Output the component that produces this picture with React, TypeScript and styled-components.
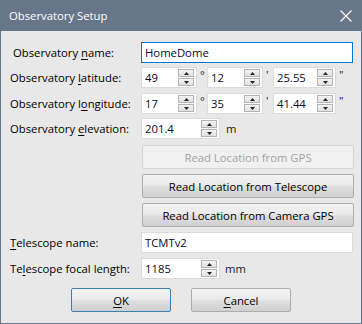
import React from 'react';
import styled, { createGlobalStyle } from 'styled-components';

const GlobalStyle = createGlobalStyle`
  html, body {
    margin: 0;
    padding: 0;
    background: #e8e8e8;
  }
  * {
    box-sizing: border-box;
  }
`;

const Spinner: React.FC = () => (
  <SpinButtons>
    <SpinHalf>
      <svg width="5" height="3" viewBox="0 0 5 3">
        <path d="M2.5 0 L5 3 L0 3 Z" fill="#222" />
      </svg>
    </SpinHalf>
    <SpinHalf>
      <svg width="5" height="3" viewBox="0 0 5 3">
        <path d="M0 0 L5 0 L2.5 3 Z" fill="#222" />
      </svg>
    </SpinHalf>
  </SpinButtons>
);

const SpinField: React.FC<{ value: string; width: number }> = ({ value, width }) => (
  <SpinBox $width={width}>
    <FieldText>{value}</FieldText>
    <Spinner />
  </SpinBox>
);

const App: React.FC = () => {
  return (
    <>
      <GlobalStyle />
      <Window>
        <TitleBar>
          <TitleText>Observatory Setup</TitleText>
          <CloseIcon width="12" height="12" viewBox="0 0 12 12">
            <path d="M0.5 0.5 L11.5 11.5 M11.5 0.5 L0.5 11.5" stroke="#fff" strokeWidth="1.1" />
          </CloseIcon>
        </TitleBar>
        <Body>
          <Row $top={11}>
            <Label $indent={3}>
              Observatory <u>n</u>ame:
            </Label>
            <TextBox $focused $width={212}>
              <FieldText>HomeDome</FieldText>
            </TextBox>
          </Row>
          <Row $top={4}>
            <Label>
              Observatory <u>l</u>atitude:
            </Label>
            <SpinField value="49" width={56} />
            <Unit $width={10}>°</Unit>
            <SpinField value="12" width={56} />
            <Unit $width={10}>'</Unit>
            <SpinField value="25.55" width={63} />
            <Unit $width={10}>"</Unit>
          </Row>
          <Row $top={5}>
            <Label>
              Observatory l<u>o</u>ngitude:
            </Label>
            <SpinField value="17" width={56} />
            <Unit $width={10}>°</Unit>
            <SpinField value="35" width={56} />
            <Unit $width={10}>'</Unit>
            <SpinField value="41.44" width={63} />
            <Unit $width={10}>"</Unit>
          </Row>
          <Row $top={4}>
            <Label>
              Observatory <u>e</u>levation:
            </Label>
            <SpinField value="201.4" width={79} />
            <Unit $width={20} $pad={6}>m</Unit>
          </Row>
          <ButtonColumn>
            <WideButton disabled>Read Location from GPS</WideButton>
            <WideButton>Read Location from Telescope</WideButton>
            <WideButton>Read Location from Camera GPS</WideButton>
          </ButtonColumn>
          <Row $top={5}>
            <Label>
              <u>T</u>elescope name:
            </Label>
            <TextBox $width={212}>
              <FieldText>TCMTv2</FieldText>
            </TextBox>
          </Row>
          <Row $top={5}>
            <Label>
              Te<u>l</u>escope focal length:
            </Label>
            <SpinField value="1185" width={79} />
            <Unit $width={30} $pad={5}>mm</Unit>
          </Row>
          <Footer>
            <DialogButton $default>
              <u>O</u>K
            </DialogButton>
            <DialogButton>
              <u>C</u>ancel
            </DialogButton>
          </Footer>
        </Body>
      </Window>
    </>
  );
};

export default App;

// Styled components

const Window = styled.div`
  width: 362px;
  height: 324px;
  display: flex;
  flex-direction: column;
  border: 1px solid #677689;
  border-top: none;
  background: #e8e8e8;
  font-family: 'Segoe UI', 'Open Sans', 'Liberation Sans', sans-serif;
  font-size: 11.3px;
  color: #000;
  overflow: hidden;
`;

const TitleBar = styled.div`
  height: 31px;
  flex: none;
  display: flex;
  align-items: center;
  justify-content: space-between;
  padding: 0 9px 0 9px;
  margin: 0 -1px;
  background: #677689;
`;

const TitleText = styled.span`
  color: #fff;
  font-size: 11.3px;
  padding-bottom: 1px;
`;

const CloseIcon = styled.svg`
  margin-right: 1px;
`;

const Body = styled.div`
  flex: 1;
  display: flex;
  flex-direction: column;
  padding-left: 9px;
`;

const Row = styled.div<{ $top: number }>`
  display: flex;
  align-items: center;
  height: 21px;
  margin-top: ${({ $top }) => $top}px;
`;

const Label = styled.div<{ $indent?: number }>`
  width: 131px;
  flex: none;
  padding-left: ${({ $indent }) => $indent ?? 0}px;
  white-space: nowrap;

  u {
    text-decoration-thickness: 1px;
    text-underline-offset: 2px;
  }
`;

const TextBox = styled.div<{ $width: number; $focused?: boolean }>`
  width: ${({ $width }) => $width}px;
  height: 21px;
  display: flex;
  align-items: center;
  background: #fff;
  border: 1px solid ${({ $focused }) => ($focused ? '#0078d7' : '#dcdcdc')};
`;

const SpinBox = styled.div<{ $width: number }>`
  width: ${({ $width }) => $width}px;
  height: 21px;
  flex: none;
  display: flex;
  align-items: center;
  justify-content: space-between;
  background: #fff;
  border: 1px solid #dcdcdc;
  padding-right: 2px;
`;

const FieldText = styled.span`
  padding-left: 3px;
  color: #0a0a28;
  white-space: nowrap;
`;

const SpinButtons = styled.div`
  width: 16px;
  height: 17px;
  display: flex;
  flex-direction: column;
  gap: 1px;
`;

const SpinHalf = styled.div`
  flex: 1;
  display: flex;
  align-items: center;
  justify-content: center;
  border: 1px solid #b4b4b4;
  background: linear-gradient(#f4f4f4, #e0e0e0);
`;

const Unit = styled.span<{ $width: number; $pad?: number }>`
  width: ${({ $width }) => $width}px;
  flex: none;
  padding-left: ${({ $pad }) => $pad ?? 3}px;
  color: #1a1a1a;
  align-self: flex-start;
  line-height: ${({ $pad }) => ($pad ? '21px' : '15px')};
`;

const ButtonColumn = styled.div`
  display: flex;
  flex-direction: column;
  gap: 5px;
  margin-top: 6px;
  padding-left: 132px;
`;

const buttonFace = `
  border: 1px solid #adadad;
  border-radius: 2px;
  background: linear-gradient(#f2f2f2 0%, #ebebeb 45%, #dedede 55%, #d0d0d0 100%);
  font-family: inherit;
  font-size: 11.3px;
  color: #000;
  padding: 0;
  cursor: pointer;
`;

const WideButton = styled.button`
  ${buttonFace}
  width: 212px;
  height: 24px;

  &:disabled {
    background: #f0f0f0;
    border-color: #d5d5d5;
    color: #a3a3a3;
    cursor: default;
  }
`;

const Footer = styled.div`
  display: flex;
  gap: 20px;
  margin-top: 9px;
  padding-left: 61px;
`;

const DialogButton = styled.button<{ $default?: boolean }>`
  ${buttonFace}
  width: 100px;
  height: 24px;
  border-color: ${({ $default }) => ($default ? '#3c7fb1' : '#adadad')};

  u {
    text-underline-offset: 2px;
  }
`;
